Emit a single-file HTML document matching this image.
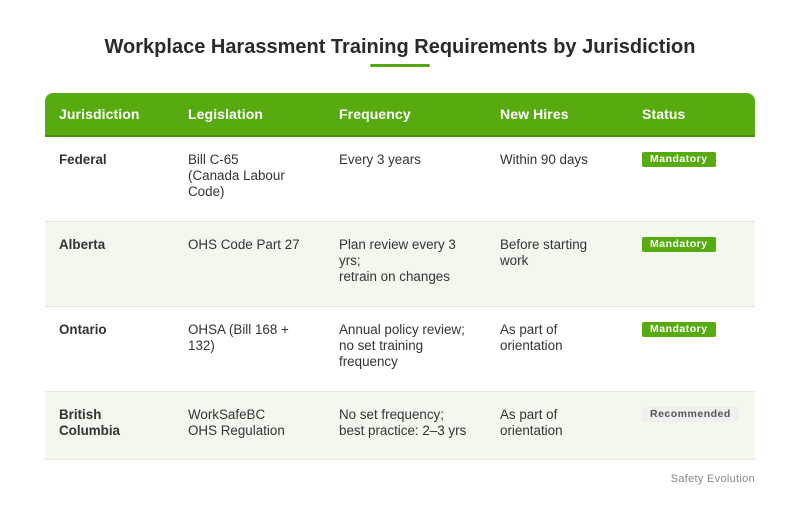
<!DOCTYPE html>
<html><head><meta charset="utf-8"><style>
*{margin:0;padding:0;box-sizing:border-box}
body{width:800px;height:520px;background:#fff;font-family:"Liberation Sans",Arial,sans-serif;color:#333;position:relative;overflow:hidden}
h1{position:absolute;top:36px;left:0;width:800px;text-align:center;font-size:20px;font-weight:bold;color:#2a2a2a}
.ul{position:absolute;left:370px;top:64px;width:60px;height:3px;border-radius:2px;background:#55a811}
.hdr{position:absolute;left:45px;top:93px;width:710px;height:44px;background:#57aa10;border-radius:8px 8px 0 0;border-bottom:2px solid #4a920c}
.hdr div,.row div{position:absolute;font-size:13.4px}
.hdr div{color:#fff;font-weight:bold;top:13px;font-size:14px;letter-spacing:0.1px}
.row{position:absolute;left:45px;width:710px;border-bottom:1px solid #e6e6e6}
.row div{top:15px;line-height:16px;color:#333}
.alt{background:#f3f8ee}
.b{font-weight:bold}
.badge{position:absolute;left:597px!important;top:15px!important;font-size:10.5px!important;font-weight:bold;padding:0 8px;height:15px;line-height:15px!important;border-radius:2px;background:#57aa10;color:#fff!important;letter-spacing:0.5px}
.rec{background:#efefef;color:#555!important}
.foot{position:absolute;right:45px;top:473px;font-size:11px;color:#888;letter-spacing:0.3px}
</style></head><body>
<h1>Workplace Harassment Training Requirements by Jurisdiction</h1>
<div class="ul"></div>
<div class="hdr">
<div style="left:14px">Jurisdiction</div><div style="left:143px">Legislation</div><div style="left:294px">Frequency</div><div style="left:455px">New Hires</div><div style="left:597px">Status</div>
</div>
<div class="row" style="top:137px;height:85px">
<div class="b" style="left:14px">Federal</div><div style="left:143px">Bill C-65<br>(Canada Labour<br>Code)</div><div style="left:294px">Every 3 years</div><div style="left:455px">Within 90 days</div><div class="badge">Mandatory</div>
</div>
<div class="row alt" style="top:222px;height:85px">
<div class="b" style="left:14px">Alberta</div><div style="left:143px">OHS Code Part 27</div><div style="left:294px">Plan review every 3<br>yrs;<br>retrain on changes</div><div style="left:455px">Before starting<br>work</div><div class="badge">Mandatory</div>
</div>
<div class="row" style="top:307px;height:85px">
<div class="b" style="left:14px">Ontario</div><div style="left:143px">OHSA (Bill 168 +<br>132)</div><div style="left:294px">Annual policy review;<br>no set training<br>frequency</div><div style="left:455px">As part of<br>orientation</div><div class="badge">Mandatory</div>
</div>
<div class="row alt" style="top:392px;height:68px">
<div class="b" style="left:14px">British<br>Columbia</div><div style="left:143px">WorkSafeBC<br>OHS Regulation</div><div style="left:294px">No set frequency;<br>best practice: 2–3 yrs</div><div style="left:455px">As part of<br>orientation</div><div class="badge rec">Recommended</div>
</div>
<div class="foot">Safety Evolution</div>
</body></html>
